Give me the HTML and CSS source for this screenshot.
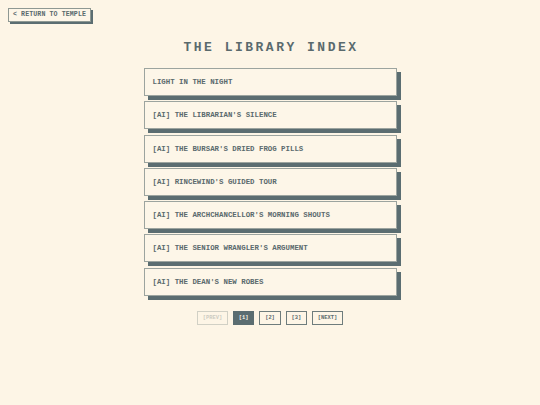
FILE: index.html
```html
<!DOCTYPE html>
<html>
<head>
<meta charset="utf-8">
<link rel="stylesheet" href="styles.css">
</head>
<body>
<div class="page">
  <div class="top"><a class="back">&lt; RETURN TO TEMPLE</a></div>
  <h1 class="title">THE LIBRARY INDEX</h1>
  <ul class="list">
    <li class="card">LIGHT IN THE NIGHT</li>
    <li class="card">[AI] THE LIBRARIAN'S SILENCE</li>
    <li class="card">[AI] THE BURSAR'S DRIED FROG PILLS</li>
    <li class="card">[AI] RINCEWIND'S GUIDED TOUR</li>
    <li class="card">[AI] THE ARCHCHANCELLOR'S MORNING SHOUTS</li>
    <li class="card">[AI] THE SENIOR WRANGLER'S ARGUMENT</li>
    <li class="card">[AI] THE DEAN'S NEW ROBES</li>
  </ul>
  <div class="pager">
    <span class="pg disabled">[PREV]</span>
    <span class="pg active">[1]</span>
    <span class="pg">[2]</span>
    <span class="pg">[3]</span>
    <span class="pg">[NEXT]</span>
  </div>
</div>
</body>
</html>
```
FILE: styles.css
```css
html, body {
  margin: 0;
  padding: 0;
  background: #fdf5e6;
}
body {
  font-family: "Courier New", "Nimbus Mono PS", "Nimbus Mono L", "FreeMono", "Liberation Mono", monospace;
  color: #5a6a6d;
}
.page {
  padding: 8px;
}
.top {
  display: flex;
}
.back {
  display: inline-block;
  font-size: 6.6px;
  font-weight: bold;
  line-height: 8px;
  padding: 2px 4px;
  border: 1px solid #8e9893;
  background: #fdf6e8;
  box-shadow: 2px 2px 0 #5b6d71;
  letter-spacing: 0.1px;
}
.title {
  margin: 18px 0 0;
  text-align: center;
  font-size: 13px;
  line-height: 16px;
  font-weight: bold;
  letter-spacing: 2.5px;
  padding-left: 2px;
}
.list {
  list-style: none;
  margin: 12px auto 0;
  padding: 0;
  width: 253px;
  display: flex;
  flex-direction: column;
  gap: 5.3px;
}
.card {
  height: 28px;
  box-sizing: border-box;
  border: 1.5px solid #9ca49f;
  background: #fdf6e8;
  box-shadow: 4px 4px 0 #5b6d71;
  display: flex;
  align-items: center;
  padding-left: 8px;
  font-size: 7.4px;
  font-weight: bold;
}
.pager {
  display: flex;
  justify-content: center;
  gap: 5px;
  margin-top: 15px;
}
.pg {
  height: 14px;
  box-sizing: border-box;
  border: 1px solid #6e7c7c;
  padding: 0 4.8px;
  font-size: 5.4px;
  font-weight: bold;
  display: flex;
  align-items: center;
}
.pg.disabled {
  opacity: 0.3;
}
.pg.active {
  background: #5b6d71;
  border-color: #5b6d71;
  color: #fdf5e6;
}
```
